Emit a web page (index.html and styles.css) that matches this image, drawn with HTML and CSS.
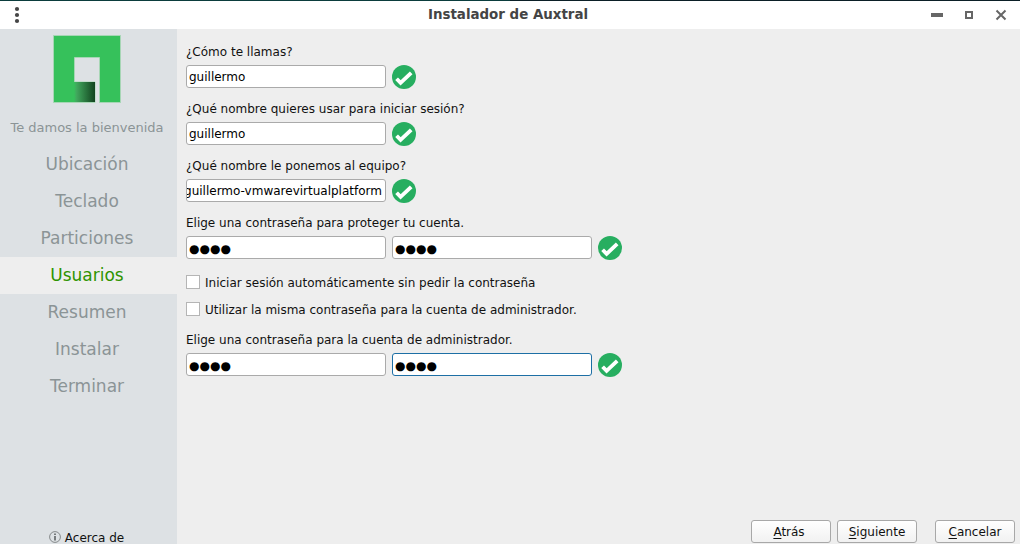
FILE: index.html
```html
<!DOCTYPE html>
<html lang="es">
<head>
<meta charset="utf-8">
<title>Instalador de Auxtral</title>
<link rel="stylesheet" href="styles.css">
</head>
<body>
<svg class="defs" aria-hidden="true">
  <symbol id="check" viewBox="0 0 24 24"><circle cx="12" cy="12" r="12" fill="#27ae60"/><path d="M4.6 13.7 8.600 17.9 19.2 7.9" fill="none" stroke="#fff" stroke-width="3.800"/></symbol>
</svg>
<div class="window">
  <header class="titlebar">
    <svg class="menu" width="6" height="18" viewBox="0 0 6 18"><g fill="#454545"><circle cx="3" cy="3" r="2.1"/><circle cx="3" cy="9" r="2.1"/><circle cx="3" cy="15" r="2.1"/></g></svg>
    <h1 class="title">Instalador de Auxtral</h1>
    <svg class="controls" width="76" height="12" viewBox="0 0 76 12"><g fill="none" stroke="#666"><path d="M0 6h12" stroke-width="4"/><path d="M35 3h6v6h-6z" stroke-width="2"/><path d="m65.5 1.5 9 9m0-9-9 9" stroke-width="2"/></g></svg>
  </header>
  <div class="body">
    <aside class="sidebar">
      <svg class="logo" width="68" height="68" viewBox="0 0 68 68">
        <defs><linearGradient id="shade"><stop offset="0" stop-color="#36c15b"/><stop offset=".12" stop-color="#41a85d"/><stop offset="1" stop-color="#12431f"/></linearGradient></defs>
        <path d="M.5.5h67v67h-21v-45h-25v24.500h20.500v20.500H.5z" fill="#36c15b" stroke="#a7d6b5" stroke-width="1"/>
        <path d="M21 47h21v20H21z" fill="url(#shade)"/>
      </svg>
      <nav class="steps">
        <div class="step welcome">Te damos la bienvenida</div>
        <div class="step">Ubicación</div>
        <div class="step">Teclado</div>
        <div class="step">Particiones</div>
        <div class="step active">Usuarios</div>
        <div class="step">Resumen</div>
        <div class="step">Instalar</div>
        <div class="step">Terminar</div>
      </nav>
      <div class="about"><svg width="12" height="12" viewBox="0 0 12 12"><circle cx="6" cy="6" r="5.4" fill="none" stroke="#85898b"/><path d="M5 2.5h2v1.5H5zM5 5h2v4.5H5z" fill="#777b7d"/></svg><span>Acerca de</span></div>
    </aside>
    <main class="main">
      <form class="form">
        <div class="group"><label>¿Cómo te llamas?</label>
          <div class="row"><div class="field">guillermo</div><svg class="ok"><use href="#check"/></svg></div></div>
        <div class="group"><label>¿Qué nombre quieres usar para iniciar sesión?</label>
          <div class="row"><div class="field">guillermo</div><svg class="ok"><use href="#check"/></svg></div></div>
        <div class="group"><label>¿Qué nombre le ponemos al equipo?</label>
          <div class="row"><div class="field scrolled">guillermo-vmwarevirtualplatform</div><svg class="ok"><use href="#check"/></svg></div></div>
        <div class="group"><label>Elige una contraseña para proteger tu cuenta.</label>
          <div class="row"><div class="field secret">●●●●</div><div class="field secret">●●●●</div><svg class="ok"><use href="#check"/></svg></div></div>
        <div class="checks">
          <label class="option"><span class="box"></span>Iniciar sesión automáticamente sin pedir la contraseña</label>
          <label class="option"><span class="box"></span>Utilizar la misma contraseña para la cuenta de administrador.</label>
        </div>
        <div class="group"><label>Elige una contraseña para la cuenta de administrador.</label>
          <div class="row"><div class="field secret">●●●●</div><div class="field secret focused">●●●●</div><svg class="ok"><use href="#check"/></svg></div></div>
      </form>
      <footer class="actions">
        <button class="button back"><u>A</u>trás</button>
        <button class="button"><u>S</u>iguiente</button>
        <button class="button cancel"><u>C</u>ancelar</button>
      </footer>
    </main>
  </div>
</div>
</body>
</html>
```
FILE: styles.css
```css
* { box-sizing: border-box; }
body { margin: 0; font: 12px/15px "DejaVu Sans", sans-serif; color: #111; }
.defs { display: none; }
.window { height: 544px; display: flex; flex-direction: column; overflow: hidden; background: #eee; }
.titlebar { flex: none; height: 29px; border-top: 1px solid; border-image: linear-gradient(90deg, #0b3d3d 50%, #0b1f26 50%) 1; background: #fff; display: grid; grid-template-columns: 76px 1fr 76px; align-items: center; padding: 0 13px 0 14px; }
.title { margin: 0; padding: 0 5px 0 0; text-align: center; font-size: 13.4px; line-height: 16px; font-weight: bold; color: #444; }
.body { flex: 1; min-height: 0; display: flex; }
.sidebar { width: 177px; flex: none; background: #dde1e4; display: flex; flex-direction: column; align-items: center; padding: 6px 0 0; }
.logo { flex: none; margin-right: 3px; }
.steps { width: 100%; padding-top: 6px; }
.step { height: 37px; line-height: 37px; padding-right: 3px; text-align: center; font-size: 17px; color: #8b9496; }
.welcome { line-height: 38px; font-size: 13px; }
.active { background: #eee; color: #2f9400; }
.about { margin-top: auto; height: 13px; display: flex; align-items: center; gap: 4px; padding-right: 4px; white-space: nowrap; }
.about svg { margin-top: -2px; }
.about span { padding-top: 2px; }
.main { flex: 1; display: flex; flex-direction: column; padding: 16px 5px 0 9px; }
.form { display: flex; flex-direction: column; gap: 13px; }
.group { display: flex; flex-direction: column; gap: 5px; }
.row { display: flex; gap: 6px; height: 24px; }
.field { width: 200px; height: 23px; border: 1px solid #aaa; border-radius: 3px; background: #fff; padding: 1px 2px 0; line-height: 21px; overflow: hidden; white-space: nowrap; color: #000; }
.scrolled { display: flex; justify-content: flex-end; padding: 1px 3px 0 0; }
.secret { font-size: 12px; line-height: 22px; }
.focused { border-color: #1d6fa5; }
.ok { width: 24px; height: 24px; }
.checks { display: flex; flex-direction: column; gap: 12px; padding: 3px 0 2px; }
.option { display: flex; align-items: center; gap: 5px; height: 15px; }
.box { width: 14px; height: 14px; margin-bottom: 3px; border: 1px solid #b5b5b5; background: #fff; }
.actions { margin-top: auto; display: flex; justify-content: flex-end; gap: 6px; padding-bottom: 1px; }
.button { width: 80px; height: 23px; padding: 1px 0 0; border: 1px solid #a8a8a8; border-radius: 3px; background: linear-gradient(#fff, #f1f1f1); font: inherit; color: #111; }
.button u { text-underline-offset: 2px; }
.back { padding-right: 4px; }
.cancel { margin-left: 12px; }
```
